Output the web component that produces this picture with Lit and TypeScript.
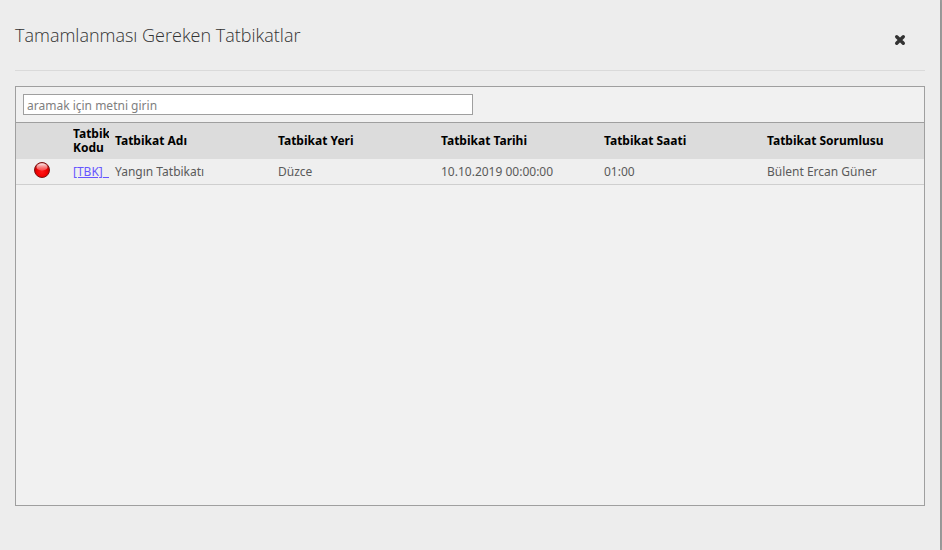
import { LitElement, html, css, svg } from "lit";
import { customElement, state } from "lit/decorators.js";

interface Drill {
  code: string;
  name: string;
  place: string;
  date: string;
  time: string;
  owner: string;
}

const drills: Drill[] = [
  {
    code: "[TBK]_1",
    name: "Yangın Tatbikatı",
    place: "Düzce",
    date: "10.10.2019 00:00:00",
    time: "01:00",
    owner: "Bülent Ercan Güner",
  },
];

const statusBall = svg`
  <defs>
    <radialGradient id="body" cx="50%" cy="62%" r="58%">
      <stop offset="0" stop-color="#ff1a1a"></stop>
      <stop offset="0.6" stop-color="#f00000"></stop>
      <stop offset="1" stop-color="#b00000"></stop>
    </radialGradient>
    <linearGradient id="gloss" x1="0" y1="0" x2="0" y2="1">
      <stop offset="0" stop-color="#fff" stop-opacity="0.95"></stop>
      <stop offset="1" stop-color="#ff8080" stop-opacity="0.45"></stop>
    </linearGradient>
  </defs>
  <circle cx="8" cy="8" r="7.5" fill="url(#body)" stroke="#7c1414"></circle>
  <ellipse cx="8" cy="5" rx="5.6" ry="3.7" fill="url(#gloss)"></ellipse>`;

@customElement("app-root")
export class AppRoot extends LitElement {
  @state() private query = "";

  static styles = css`
    :host {
      display: block;
      min-height: 100vh;
      box-sizing: border-box;
      background: #a0a0a0;
      padding-right: 2px;
      font: 12px/14px "Noto Sans", "Open Sans", sans-serif;
      color: #5a5a5a;
    }
    .dialog {
      min-height: 100vh;
      box-sizing: border-box;
      padding: 0 15px 44px;
      background: #ededed;
      display: flex;
      flex-direction: column;
      box-shadow: 0 0 4px #888;
    }
    .head {
      display: flex;
      align-items: center;
      justify-content: space-between;
      height: 70px;
      border-bottom: 1px solid #dadada;
      margin-bottom: 15px;
      flex: none;
    }
    .title {
      margin: 0;
      font: 300 18px/24px "Open Sans", "Noto Sans", sans-serif;
      color: #333;
    }
    .close {
      border: 0;
      padding: 10px 19px 0;
      background: none;
      line-height: 0;
      cursor: pointer;
    }
    .grid {
      flex: 1;
      border: 1px solid #9f9f9f;
      background: #f1f1f1;
    }
    .search {
      padding: 7px;
      border-bottom: 1px solid #9f9f9f;
      display: flex;
    }
    .field {
      width: 450px;
      height: 21px;
      box-sizing: border-box;
      border: 1px solid #9f9f9f;
      padding: 1px 3px 0;
      background: #fff;
      font: inherit;
      color: #333;
      border-radius: 0;
    }
    .field::placeholder {
      color: #808080;
      opacity: 1;
    }
    table {
      width: 100%;
      table-layout: fixed;
      border-collapse: separate;
      border-spacing: 0;
    }
    .c-state { width: 54px; }
    .c-code { width: 42px; }
    .c-text { width: 163px; }
    th, td {
      padding: 0 3px;
      text-align: left;
      vertical-align: middle;
    }
    th {
      height: 36px;
      background: #dcdcdc;
      color: #000;
      font-weight: 700;
    }
    td {
      height: 25px;
      background: #efefef;
      border-bottom: 1px solid #cfcfcf;
      white-space: nowrap;
    }
    .clip { overflow: hidden; }
    .ball {
      display: block;
      margin: 0 auto 4px 15px;
    }
    a { color: #6656ff; }
  `;

  private search(e: Event) {
    this.query = (e.target as HTMLInputElement).value;
  }

  render() {
    const q = this.query.toLocaleLowerCase("tr");
    const rows = drills.filter((d) =>
      Object.values(d).join(" ").toLocaleLowerCase("tr").includes(q)
    );
    return html`
      <main class="dialog">
        <header class="head">
          <h1 class="title">Tamamlanması Gereken Tatbikatlar</h1>
          <button class="close" type="button" aria-label="Kapat">
            <svg width="12" height="12" viewBox="0 0 12 12">
              <path d="M2.7 2.7L9.3 9.3M9.3 2.7L2.7 9.3" stroke="#333" stroke-width="3.4" stroke-linecap="round"></path>
            </svg>
          </button>
        </header>
        <section class="grid">
          <div class="search">
            <input class="field" type="text" aria-label="Ara"
              placeholder="aramak için metni girin"
              .value=${this.query} @input=${this.search} />
          </div>
          <table>
            <colgroup>
              <col class="c-state" /><col class="c-code" />
              <col class="c-text" /><col class="c-text" />
              <col class="c-text" /><col class="c-text" /><col />
            </colgroup>
            <thead>
              <tr>
                <th></th>
                <th><div class="clip">Tatbikat Kodu</div></th>
                <th>Tatbikat Adı</th>
                <th>Tatbikat Yeri</th>
                <th>Tatbikat Tarihi</th>
                <th>Tatbikat Saati</th>
                <th>Tatbikat Sorumlusu</th>
              </tr>
            </thead>
            <tbody>
              ${rows.map(
                (d) => html`<tr>
                  <td><svg class="ball" width="16" height="16" viewBox="0 0 16 16">${statusBall}</svg></td>
                  <td><div class="clip"><a href="#">${d.code}</a></div></td>
                  <td>${d.name}</td>
                  <td>${d.place}</td>
                  <td>${d.date}</td>
                  <td>${d.time}</td>
                  <td>${d.owner}</td>
                </tr>`
              )}
            </tbody>
          </table>
        </section>
      </main>
    `;
  }
}
